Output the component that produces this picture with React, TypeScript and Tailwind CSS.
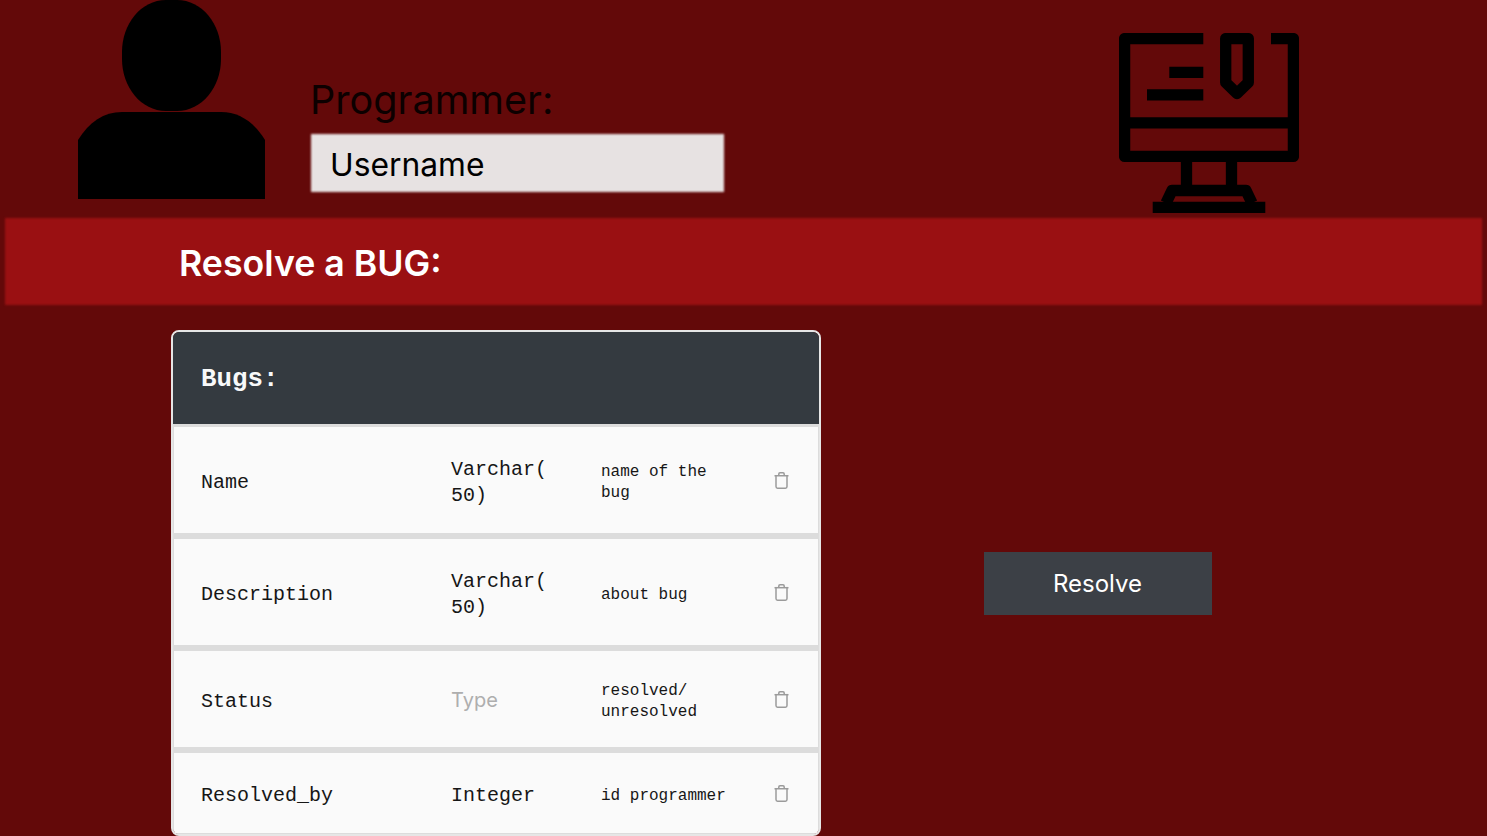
import React from "react";

function Avatar() {
  return (
    <svg width="187" height="199" viewBox="0 0 187 199" className="shrink-0">
      <path d="M44 0h11c25 0 44 24 44 52v7c0 28-19 52-44 52H44C19 111 0 87 0 59v-7C0 24 19 0 44 0Z" transform="translate(44 0)" fill="#000" />
      <path d="M0 199V140C11 122 26 112 44 112H143C161 112 176 122 187 140V199Z" fill="#000" />
    </svg>
  );
}

function Monitor() {
  return (
    <svg width="180" height="180" viewBox="0 0 180 180" className="shrink-0" fill="none" stroke="#000" strokeWidth="11.3">
      <path d="M84.3 5.6H5.6V123.4H174.4V5.6H152" strokeLinejoin="round" />
      <path d="M5.6 89.8H174.4" />
      <path d="M50.3 39.4H84.3M28 61.8H84.3" />
      <path d="M106.7 5.6H129.3V49.5L118 60.5L106.7 49.5Z" strokeLinejoin="round" />
      <path d="M67.5 123V157M112.5 123V157" />
      <path d="M47 170L53 157.5H127L133 170" strokeLinejoin="round" />
      <path d="M33.7 174.4H146.3" />
    </svg>
  );
}

function Trash() {
  return (
    <svg width="15" height="17" viewBox="0 0 15 17" fill="none" stroke="#9b9b9b" strokeWidth="1.5" className="shrink-0">
      <path d="M2 4V14.6C2 15.5 2.6 16.2 3.5 16.2H11.5C12.4 16.2 13 15.5 13 14.6V4" />
      <path d="M0.5 3.7H14.5" />
      <path d="M4.8 3.5V2C4.8 1.3 5.3 0.8 6 0.8H9C9.7 0.8 10.2 1.3 10.2 2V3.5" />
    </svg>
  );
}

const rows = [
  { name: "Name", type: "Varchar(50)", desc: "name of the bug", box: "h-[112px] border-y-[3px]", faded: false },
  { name: "Description", type: "Varchar(50)", desc: "about bug", box: "h-[112px] border-y-[3px]", faded: false },
  { name: "Status", type: "Type", desc: "resolved/ unresolved", box: "h-[102px] border-y-[3px]", faded: true },
  { name: "Resolved_by", type: "Integer", desc: "id programmer", box: "h-[84px] border-t-[3px] border-b", faded: false },
];

export default function App() {
  return (
    <div className="h-[836px] w-full overflow-hidden bg-[#630909] font-['Inter',sans-serif]">
      <header className="flex h-[218px] pl-[78px]">
        <Avatar />
        <div className="ml-[46px] w-[413px] pt-[76px]">
          <div className="-ml-px h-[58px] text-[39.6px] leading-[49px] text-[#0c0000]">Programmer:</div>
          <div className="relative flex h-[58px] items-center pl-[19px] pt-[4px] text-[31.8px] text-black">
            <div className="absolute inset-0 bg-[#e7e2e2] blur-[1px]" />
            <span className="relative">Username</span>
          </div>
        </div>
        <div className="ml-[395px] pt-[33px]">
          <Monitor />
        </div>
      </header>

      <div className="relative mx-[5px] flex h-[87px] items-center pl-[174px] pt-[4px] text-[35.7px] font-semibold text-white">
        <div className="absolute inset-0 bg-[#9a1012] blur-[1px]" />
        <span className="relative">Resolve a BUG:</span>
      </div>

      <main className="flex items-start pl-[171px] pt-[25px]">
        <section className="w-[650px] shrink-0 overflow-hidden rounded-[8px] border-2 border-[#e6e6e6] font-['Liberation_Mono',monospace] text-[#161616]">
          <div className="flex h-[92px] items-center bg-[#343a40] pl-[28px] pt-[4px] text-[25.8px] font-semibold text-[#f8f9fa]">Bugs:</div>
          {rows.map((r) => (
            <div key={r.name} className={`flex items-center border-x border-[#dcdcdc] bg-[#fafafa] ${r.box}`}>
              <div className="w-[277px] shrink-0 pl-[27px] pt-[5px] text-[20px]">{r.name}</div>
              <div className={`w-[150px] shrink-0 text-[20px] ${r.faded ? "pt-[2px] font-['Inter',sans-serif] leading-[26px] text-[#aeaeae]" : "pt-[5px] leading-[25.5px]"}`}>
                <div className="w-[100px] break-words">{r.type}</div>
              </div>
              <div className="w-[150px] shrink-0 pr-[14px] pt-[6px] text-[16px] leading-[21px]">{r.desc}</div>
              <div className="ml-[23px]">
                <Trash />
              </div>
            </div>
          ))}
        </section>
        <button className="ml-[163px] mt-[222px] flex h-[63px] w-[228px] items-center justify-center bg-[#3c4046] pr-px text-[24px] text-white">
          Resolve
        </button>
      </main>
    </div>
  );
}
